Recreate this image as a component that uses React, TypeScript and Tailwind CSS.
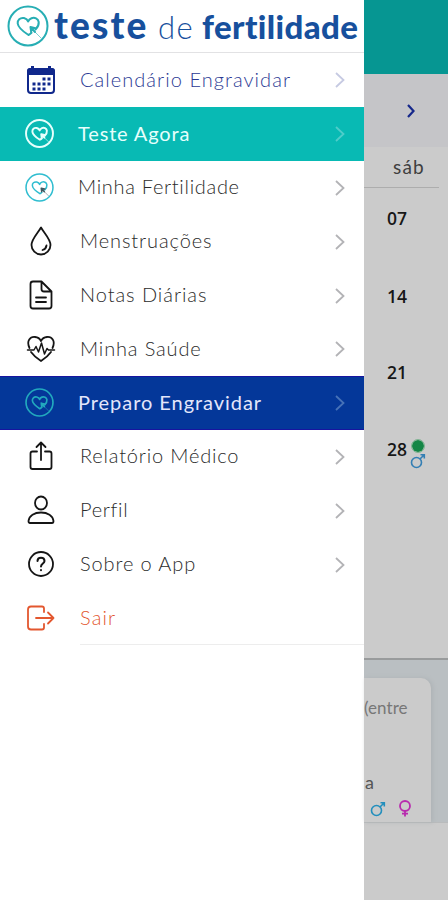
import type { ReactNode } from "react";

function HeartBadge({ className, stroke = 2, tail = "currentColor" }: { className: string; stroke?: number; tail?: string }) {
  return (
    <svg viewBox="0 0 42 42" fill="none" stroke="currentColor" strokeWidth={stroke} strokeLinecap="round" strokeLinejoin="round" className={className}>
      <circle cx="21" cy="21" r="19.5" />
      <path d="M28.500 24.500C31 22 32 19.500 31.700 17C31.200 13.500 27.500 12 24.500 13.200C22.800 13.900 21.700 15.200 21.200 16.500C20.500 14.800 19 13.500 17 13C13 12.300 10.300 15 10.700 18.500C11.200 22.500 16 26.500 21.500 30C22.700 29.400 23.700 28.600 24.500 27.800" />
      <path d="M23.500 22L28.500 23.200M23.500 22L24.200 27M23.500 22L28 27" stroke={tail} />
      <path d="M28 27L34 33" stroke={tail} strokeWidth={stroke * 0.5} opacity="0.6" />
    </svg>
  );
}

function Calendar() {
  const dots = [
    [17, 13], [22, 13],
    [7, 18], [12, 18], [17, 18], [22, 18],
    [7, 23], [12, 23], [17, 23],
  ];
  return (
    <svg viewBox="0 0 30 30" className="h-[30px] w-[30px]" fill="none">
      <rect x="2" y="4" width="26" height="24" rx="3" stroke="currentColor" strokeWidth="2" />
      <path d="M1 10V6Q1 3 4 3H5V1H8V3H22V1H25V3H26Q29 3 29 6V10Z" fill="currentColor" />
      {dots.map(([x, y]) => (
        <rect key={`${x}-${y}`} x={x - 0.5} y={y - 0.5} width="3" height="3" fill="currentColor" />
      ))}
    </svg>
  );
}

function Line({ children }: { children: ReactNode }) {
  return (
    <svg viewBox="0 0 30 30" className="h-[30px] w-[30px]" fill="none" stroke="currentColor" strokeWidth="1.800" strokeLinecap="round" strokeLinejoin="round">
      {children}
    </svg>
  );
}

function Chevron({ className }: { className: string }) {
  return (
    <svg viewBox="0 0 10 16" className={className} fill="none" stroke="currentColor" strokeWidth="1.800">
      <path d="M1 1L8.500 8L1 15" />
    </svg>
  );
}

function Male({ className }: { className: string }) {
  return (
    <svg viewBox="0 0 16 16" className={className} fill="none" stroke="currentColor" strokeWidth="1.600">
      <circle cx="6.500" cy="9.500" r="5" />
      <path d="M10 6L14 2M10.500 1.700H14.300V5.500" />
    </svg>
  );
}

type Row = { label: string; icon: ReactNode; text: string; row?: string; arrow?: string };

const rows: Row[] = [
  { label: "Calendário Engravidar", icon: <Calendar />, text: "text-[#2b3a94] tracking-[1.050px] pl-[80px]", row: "text-[#10288c]", arrow: "text-[#c6cae2]" },
  { label: "Teste Agora", icon: <HeartBadge className="-ml-[1px] size-[29px]" stroke={2.8} />, text: "font-normal text-[#e6fffc] tracking-[0.850px] pl-[78px]", row: "bg-[#08bab4] text-[#e6fffc]", arrow: "text-[#50cdca]" },
  { label: "Minha Fertilidade", icon: <HeartBadge className="-ml-[1px] size-[29px]" stroke={2.2} tail="#405860" />, text: "text-[#2b2b2b] tracking-[0.700px] pl-[78px]", row: "text-[#2fbdd0]" },
  {
    label: "Menstruações",
    icon: <Line><path d="M15 1.500C12 7 5.500 13 5.500 19A9.500 9.500 0 0 0 24.500 19C24.500 13 18 7 15 1.500Z" /><path d="M20.500 19.500A5.500 5.500 0 0 1 16.500 24" /></Line>,
    text: "text-[#2b2b2b] tracking-[0.900px] pl-[80px]",
  },
  {
    label: "Notas Diárias",
    icon: <Line><path d="M15.500 1.500H7Q4.500 1.500 4.500 4V26Q4.500 28.500 7 28.500H23Q25.500 28.500 25.500 26V11.500ZM15.500 1.500V9Q15.500 11.500 18 11.500H25.500M10 17.500H20M10 22H20" /></Line>,
    text: "text-[#2b2b2b] tracking-[0.950px] pl-[80px]",
  },
  {
    label: "Minha Saúde",
    icon: <Line><path d="M3.500 14C0 6.500 4.500 2.500 9 3C12 3.300 14 5 15 7C16 5 18 3.300 21 3C25.500 2.500 30 6.500 26.500 14M5 18C7.500 21.500 11 24.500 15 27C19 24.500 22.500 21.500 25 18" /><path d="M1.500 16H8L10 12.500L12.500 18L15.500 9L18.500 20L21 14.500L22.500 16H28.500" strokeWidth="1.500" /></Line>,
    text: "text-[#2b2b2b] tracking-[0.850px] pl-[80px]",
  },
  { label: "Preparo Engravidar", icon: <HeartBadge className="-ml-[1px] size-[29px]" stroke={2.4} />, text: "font-normal text-[#e3e6fb] tracking-[0.950px] pl-[78px]", row: "bg-[#043799] border-y border-[#1714a0] text-[#22a9be]", arrow: "text-[#4772b8]" },
  {
    label: "Relatório Médico",
    icon: <Line><path d="M11 10.500H6.500Q4.500 10.500 4.500 12.500V26Q4.500 28 6.500 28H23.500Q25.500 28 25.500 26V12.500Q25.500 10.500 23.500 10.500H19M15 19V1.500M10.500 6L15 1.500L19.500 6" /></Line>,
    text: "text-[#2b2b2b] tracking-[0.820px] pl-[80px]",
  },
  {
    label: "Perfil",
    icon: <Line><ellipse cx="15" cy="8" rx="6" ry="6.500" /><path d="M2.500 26C3 20.500 8.500 17.500 15 17.500S27 20.500 27.500 26Q27.500 28 26 28H4Q2.500 28 2.500 26Z" /></Line>,
    text: "text-[#2b2b2b] tracking-[0.700px] pl-[80px]",
  },
  {
    label: "Sobre o App",
    icon: <Line><circle cx="15" cy="15" r="12" /><path d="M11.500 12C11.500 7.500 18.500 7.500 18.500 12C18.500 14.500 15 14.500 15 17.500M15 21V21.300" strokeWidth="2" /></Line>,
    text: "text-[#2b2b2b] tracking-[0.900px] pl-[80px]",
  },
];

function MenuRow({ r }: { r: Row }) {
  return (
    <li className={`grid h-[53.800px] grid-cols-[1fr_34px] items-center ${r.row ?? "text-[#151515]"}`}>
      <div className="grid items-center">
        <span className="col-start-1 row-start-1 pl-[26px]">{r.icon}</span>
        <span className={`col-start-1 row-start-1 pb-[2px] whitespace-nowrap text-[20px] leading-6 ${r.text}`}>{r.label}</span>
      </div>
      <Chevron className={`mt-px ml-[5px] h-4 w-[10px] ${r.arrow ?? "text-[#b3b3b6]"}`} />
    </li>
  );
}

export default function App() {
  return (
    <div className="flex h-[900px] w-[448px] overflow-hidden bg-white font-['Lato',sans-serif]">
      <aside className="flex w-[364px] shrink-0 flex-col bg-white font-light">
        <header className="flex h-[53px] items-center border-b border-[#e2e2e4] pl-[7px]">
          <HeartBadge className="size-[42px] shrink-0 text-[#27aeb4]" stroke={2} />
          <h1 className="flex items-baseline pt-[2px] whitespace-nowrap text-[#17509d]">
            <span className="ml-[5px] w-[104px] text-[37px] leading-[44px] font-black tracking-[2.200px]">teste</span>
            <span className="w-[44px] text-[31px] font-light tracking-[1.500px]">de</span>
            <span className="text-[33px] font-black tracking-[0.400px]">fertilidade</span>
          </h1>
        </header>
        <ul>
          {rows.map((r) => <MenuRow key={r.label} r={r} />)}
          <li className="flex h-[54px] text-[#e3572f]">
            <span className="flex w-[80px] items-center pl-[26px]">
              <Line><path d="M18 9V5.500Q18 3.500 16 3.500H5Q2 3.500 2 6.500V23.500Q2 26.500 5 26.500H16Q18 26.500 18 24.500V21M10 15H27.500M22 9.500L27.500 15L22 20.500" /></Line>
            </span>
            <span className="flex flex-1 items-center border-b border-[#ededed] text-[20px] tracking-[1.100px]">Sair</span>
          </li>
        </ul>
      </aside>
      <main className="flex flex-1 flex-col bg-[#cbcbcb] text-[#171717]">
        <div className="h-[74px] bg-[#069692]" />
        <div className="flex h-[73px] items-center bg-[#c5c5c8] pl-[43px]">
          <svg viewBox="0 0 8 14" className="h-[14px] w-2 text-[#16288b]" fill="none" stroke="currentColor" strokeWidth="2.200"><path d="M1 1L6.500 7L1 13" /></svg>
        </div>
        <div className="mr-[9px] h-[41px] border-b border-[#adadad] pt-[8px] pl-[29px] text-[19px] leading-6 tracking-[1.200px] text-[#3f3f3f]">sáb</div>
        <div className="flex h-[472px] flex-col border-b-2 border-[#999b9c] pt-[18px] pl-[23px] font-['Open_Sans',sans-serif] text-[17.500px] leading-6 font-semibold">
          <span className="h-[78px]">07</span>
          <span className="h-[76px]">14</span>
          <span className="h-[77px]">21</span>
          <div className="flex">
            <span className="w-[23px]">28</span>
            <div className="flex flex-col items-center">
              <span className="mt-[3px] size-3 rounded-full bg-[#148646] outline outline-[#7eb391]" />
              <Male className="mt-px size-4 text-[#347fb4]" />
            </div>
          </div>
        </div>
        <div className="h-[163px] border-b border-[#b9bbbc] bg-[#babfc2] pt-[18px]">
          <div className="mr-[17px] flex h-full flex-col rounded-tr-[10px] bg-[#cbcbcb] shadow-[2px_0_4px_#aeb3b6]">
            <span className="mt-[18px] text-[17px] leading-6 tracking-[0.050px] text-[#777]">(entre</span>
            <span className="mt-[50px] pl-px text-[18px] leading-6 text-[#555]">a</span>
            <div className="mt-[6px] flex items-center gap-[12px] pl-[6px]">
              <Male className="size-4 text-[#238fbd]" />
              <svg viewBox="0 0 14 17" className="h-[17px] w-[14px] text-[#b82bae]" fill="none" stroke="currentColor" strokeWidth="1.800"><circle cx="7" cy="6" r="5" /><path d="M7 11V16.500M4 13.700H10" /></svg>
            </div>
          </div>
        </div>
      </main>
    </div>
  );
}
